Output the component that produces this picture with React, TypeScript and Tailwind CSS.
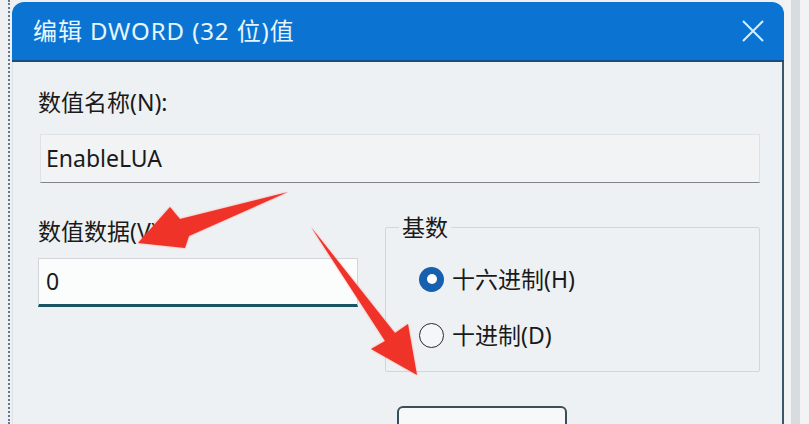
import React from "react";

const font = { fontFamily: '"Noto Sans","Noto Sans CJK SC",sans-serif' };

export default function App() {
  return (
    <div
      className="relative flex w-[809px] h-[424px] overflow-hidden bg-[#eef0f2] text-[#1a1a1a]"
      style={font}
    >
      {/* left strip with dotted line */}
      <div className="w-[12px] h-full flex pl-[8px]">
        <div className="h-full w-0 border-l-2 border-dotted border-[#5f7898]" />
      </div>

      {/* dialog */}
      <div className="w-[772px] mt-[2px] flex flex-col rounded-t-[12px] overflow-hidden">
        <div className="h-[60px] shrink-0 bg-[#0b74d2] border-b-2 border-[#1d4c78] flex items-center justify-between pl-[21px] pr-[18px]">
          <span className="text-[24px] leading-[32px] text-[#e6f6ff] tracking-[0.9px]">编辑 DWORD (32 位)值</span>
          <svg width="24" height="24" viewBox="0 0 24 24" className="mr-[1px]">
            <path d="M2 2 L22 22 M22 2 L2 22" stroke="#d4f0ff" strokeWidth="2" fill="none" />
          </svg>
        </div>

        <div className="flex-1 bg-[#eef1f3] border-r-2 border-[#3f5669] border-l border-l-[#dfe3e6] pl-[25px] pt-[24px] flex flex-col">
          <div className="text-[23px] leading-[32px]">数值名称(N):</div>
          <div className="mt-[16px] ml-[2px] w-[720px] h-[49px] bg-[#f1f3f4] border border-[#dfe2e4] border-b-[#80858a] flex items-center pl-[5px] text-[23px]">
            EnableLUA
          </div>

          <div className="mt-[28px] flex">
            <div className="w-[320px] pt-[4px] flex flex-col">
              <div className="text-[23px] leading-[32px]">数值数据(V):</div>
              <div className="mt-[11px] h-[49px] bg-[#fbfdfd] border border-[#d2d6d8] border-b-[3px] border-b-[#1b5562] flex items-center pl-[7px] text-[23px]">
                0
              </div>
            </div>

            <fieldset className="ml-[27px] w-[375px] h-[161px] border border-[#d3d6d9] rounded-[2px] pl-[33px] pt-[20px]">
              <legend className="ml-[-20px] px-[3px] text-[23px] leading-[32px]">基数</legend>
              <div className="flex items-center gap-[8px] h-[32px]">
                <span className="w-[25px] h-[25px] rounded-full bg-[#1660ae] flex items-center justify-center">
                  <span className="w-[10px] h-[10px] rounded-full bg-white" />
                </span>
                <span className="text-[23px] leading-[32px]">十六进制(H)</span>
              </div>
              <div className="mt-[24px] flex items-center gap-[8px] h-[32px]">
                <span className="w-[25px] h-[25px] rounded-full border-[1.5px] border-[#2a2a2a] bg-[#f4f6f7]" />
                <span className="text-[23px] leading-[32px]">十进制(D)</span>
              </div>
            </fieldset>
          </div>

          <div className="mt-[34px] ml-[359px] w-[170px] h-[48px] shrink-0 border-2 border-[#3b4f5b] rounded-[6px] bg-[#f6f8f9] flex justify-center pt-[11px] text-[23px] leading-[32px]">
            确定
          </div>
        </div>
      </div>

      {/* right strip */}
      <div className="flex-1 flex bg-[#f2f3f4]">
        <div className="w-[7px]" />
        <div className="w-[9px] bg-[#d9dcdf]" />
      </div>

      {/* red arrows overlay */}
      <svg className="absolute inset-0 pointer-events-none" width="809" height="424" viewBox="0 0 809 424">
        <defs>
          <filter id="glow" x="-20%" y="-20%" width="140%" height="140%">
            <feGaussianBlur stdDeviation="1.2" />
          </filter>
        </defs>
        <g>
          <polygon
            points="288,192 180,219 170,207 138,243 185,248 189,236"
            fill="#ff8a8a"
            filter="url(#glow)"
            opacity="0.8"
          />
          <polygon points="288,192 180,219 170,207 138,243 185,248 189,236" fill="#ef3328" />
          <polygon
            points="311,227 395,333 408,324 417,375 371,349 385,341"
            fill="#ff8a8a"
            filter="url(#glow)"
            opacity="0.8"
          />
          <polygon points="311,227 395,333 408,324 417,375 371,349 385,341" fill="#ef3328" />
        </g>
      </svg>
    </div>
  );
}
